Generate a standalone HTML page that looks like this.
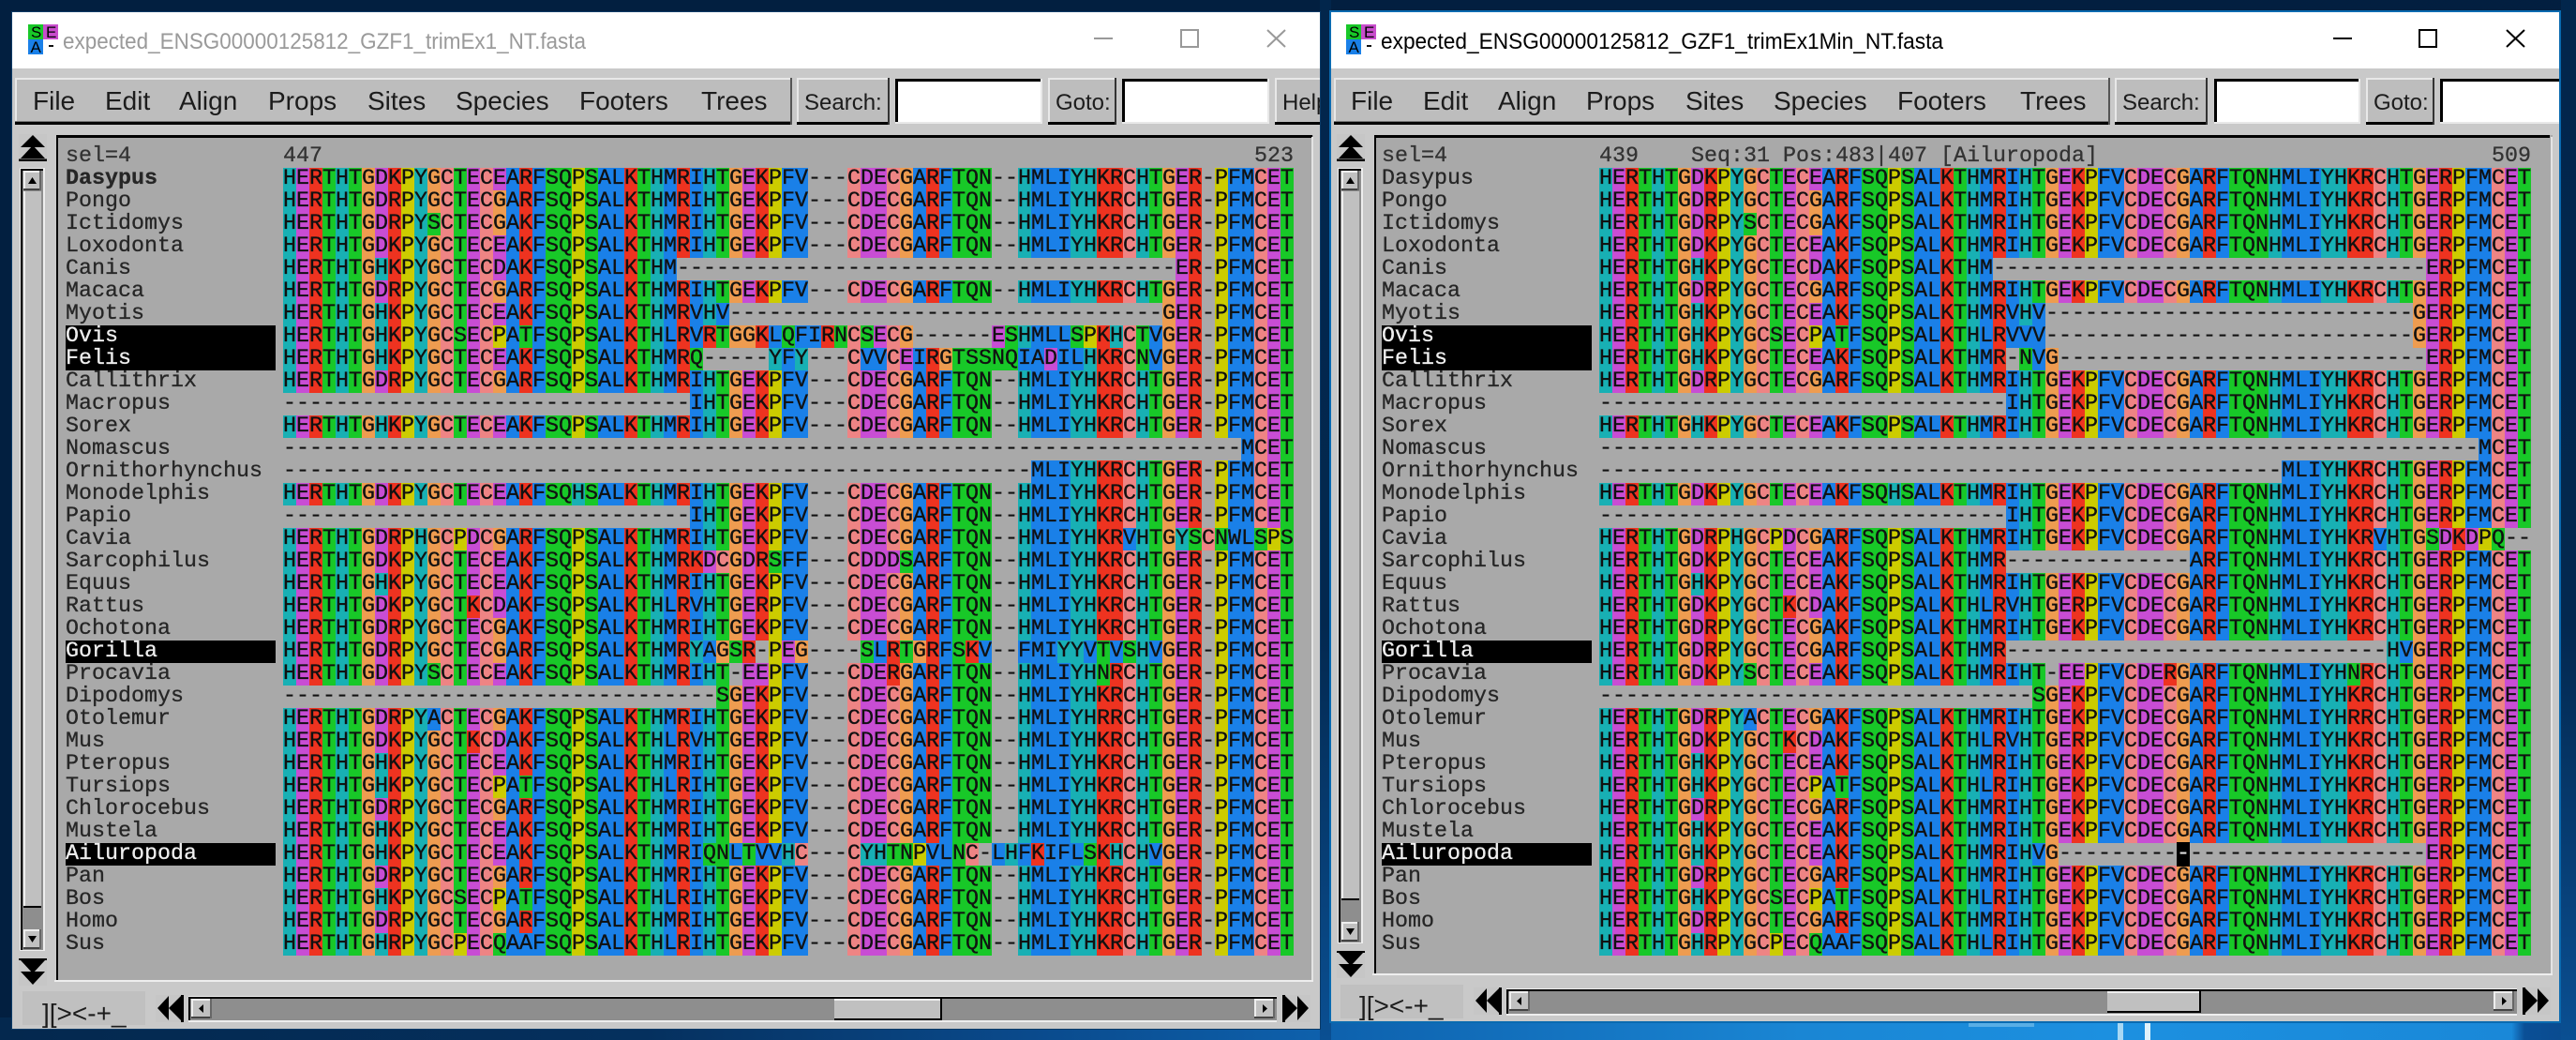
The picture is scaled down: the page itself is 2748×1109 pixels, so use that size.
<!DOCTYPE html>
<html><head><meta charset="utf-8"><title>SeaView</title>
<style>
html,body{margin:0;padding:0;width:2748px;height:1109px;overflow:hidden;background:#021f40}
svg.c{position:absolute;left:0;top:0}
svg text{font-family:"Liberation Sans",sans-serif;fill:#1c1c1c}
.m{font-size:28px}.t{font-size:24px}
.blk{position:absolute;font:23.33px/24px "Liberation Mono",monospace;color:#111;white-space:nowrap;margin:0;-webkit-text-stroke:.3px currentColor}
.blk div{height:24px}
.lab{color:#262626}
.lab i{font-style:normal;display:block;height:24px;background:#000;color:#eee;width:224px;margin-left:1px}
.lab div{padding-left:1px}
.hd{color:#333;white-space:pre}
.cur{background:#000;color:#ddd}
</style></head><body>
<svg class="c" width="2748" height="1109" viewBox="0 0 2748 1109" xmlns="http://www.w3.org/2000/svg">
<defs>
<linearGradient id="wp" x1="0" x2="1" y1="0" y2="0">
<stop offset="0" stop-color="#04284e"/><stop offset=".25" stop-color="#05305e"/><stop offset=".4" stop-color="#0a4a8c"/><stop offset=".52" stop-color="#0e62ae"/><stop offset=".7" stop-color="#1a86d4"/><stop offset=".82" stop-color="#1c90e0"/><stop offset=".975" stop-color="#1a88d8"/><stop offset=".98" stop-color="#0a4f96"/><stop offset="1" stop-color="#0a4a8e"/>
</linearGradient>
<linearGradient id="gap" x1="0" x2="0" y1="0" y2="1"><stop offset="0" stop-color="#02264c"/><stop offset=".6" stop-color="#03284f"/><stop offset="1" stop-color="#0a4f92"/></linearGradient>
<g id="dbu"><rect width="30" height="29" fill="#c6c6c6"/><polygon points="15,1 28,14 2,14"/><polygon points="15,12 28,26 2,26"/><rect y="26.5" width="30" height="2.5"/></g>
<g id="dbd"><rect width="30" height="29" fill="#c6c6c6"/><rect width="30" height="2"/><polygon points="2,2 28,2 15,16"/><polygon points="2,14 28,14 15,28"/></g>
<g id="dbl"><rect width="30" height="29" fill="#c6c6c6"/><polygon points="2,14 14,1 14,27"/><polygon points="14,14 27,1 27,27"/><rect x="27" width="3" height="29"/></g>
<g id="dbr"><rect width="30" height="29" fill="#c6c6c6"/><polygon points="28,14 16,1 16,27"/><polygon points="16,14 3,1 3,27"/><rect width="3" height="29"/></g>
<g id="ub"><rect width="19" height="21" fill="#c0c0c0"/><rect width="19" height="2" fill="#eee"/><rect width="2" height="21" fill="#eee"/><rect y="19" width="19" height="2" fill="#444"/><rect x="17" width="2" height="21" fill="#666"/><polygon points="9.5,7 5,14 14,14"/></g>
<g id="db"><rect width="19" height="21" fill="#c0c0c0"/><rect width="19" height="2" fill="#eee"/><rect width="2" height="21" fill="#eee"/><rect y="19" width="19" height="2" fill="#444"/><rect x="17" width="2" height="21" fill="#666"/><polygon points="5,7 14,7 9.5,14"/></g>
<g id="lb"><rect width="22" height="21" fill="#c0c0c0"/><rect width="22" height="2" fill="#eee"/><rect width="2" height="21" fill="#eee"/><rect y="19" width="22" height="2" fill="#444"/><rect x="20" width="2" height="21" fill="#666"/><polygon points="8,10.5 13,6 13,15"/></g>
<g id="rb"><rect width="22" height="21" fill="#c0c0c0"/><rect width="22" height="2" fill="#eee"/><rect width="2" height="21" fill="#eee"/><rect y="19" width="22" height="2" fill="#444"/><rect x="20" width="2" height="21" fill="#666"/><polygon points="14,10.5 9,6 9,15"/></g>
<g id="logo"><rect width="16" height="16" fill="#18c828"/><rect x="16" width="16" height="16" fill="#c84dcc"/><rect y="16" width="16" height="16" fill="#1a80e8"/><rect x="22" y="22" width="5" height="2" fill="#111"/>
<text x="3" y="14" style="font-size:17px;fill:#000">S</text><text x="19" y="14" style="font-size:17px;fill:#000">E</text><text x="2.5" y="30" style="font-size:17px;fill:#000">A</text></g>
</defs>
<!-- wallpaper -->
<rect width="2748" height="1109" fill="#021f40"/>
<rect y="1085" width="2748" height="24" fill="url(#wp)"/>
<rect x="1408" y="0" width="12" height="1109" fill="url(#gap)"/>
<rect x="2732" y="0" width="16" height="1109" fill="url(#gap)"/>
<rect x="2100" y="1091" width="70" height="4" fill="#58aee6"/>
<rect x="2259" y="1091" width="6" height="18" fill="#a8d8f4"/><rect x="2288" y="1091" width="6" height="18" fill="#e0f2fb"/>

<!-- LEFT WINDOW -->
<rect x="12" y="12" width="1397" height="1086" fill="#0b3a66"/>
<svg x="13" y="13" width="1395" height="1084" viewBox="13 13 1395 1084">
<rect x="13" y="13" width="1395" height="1084" fill="#c9c9c9"/>
<rect x="13" y="13" width="1395" height="60" fill="#fff"/>
<use href="#logo" x="30" y="26"/>
<text x="67" y="52" textLength="558" lengthAdjust="spacingAndGlyphs" style="font-size:24px;fill:#9a9a9a">expected_ENSG00000125812_GZF1_trimEx1_NT.fasta</text>
<rect x="1167" y="40" width="20" height="2" fill="#999"/>
<rect x="1260" y="32" width="18" height="18" fill="none" stroke="#999" stroke-width="2"/>
<path d="M1352 32L1371 50M1371 32L1352 50" stroke="#999" stroke-width="2" fill="none"/>
<!-- menu -->
<rect x="16" y="83" width="829" height="49" fill="#bdbdbd"/><rect x="16" y="83" width="829" height="2" fill="#e8e8e8"/><rect x="16" y="83" width="2" height="49" fill="#e8e8e8"/><rect x="16" y="129" width="829" height="1" fill="#777"/><rect x="16" y="130" width="829" height="3"/><rect x="843" y="83" width="2" height="50" fill="#555"/>
<text class="m" x="35" y="117">File</text><text class="m" x="112" y="117">Edit</text><text class="m" x="191" y="117">Align</text><text class="m" x="286" y="117">Props</text><text class="m" x="392" y="117">Sites</text><text class="m" x="486" y="117">Species</text><text class="m" x="618" y="117">Footers</text><text class="m" x="748" y="117">Trees</text>
<!-- search -->
<rect x="850" y="83" width="99" height="49" fill="#bdbdbd"/><rect x="850" y="83" width="99" height="2" fill="#e8e8e8"/><rect x="850" y="83" width="2" height="49" fill="#e8e8e8"/><rect x="850" y="130" width="99" height="3"/><rect x="947" y="83" width="2" height="50" fill="#333"/>
<text class="t" x="858" y="117">Search:</text>
<rect x="955" y="84" width="157" height="48" fill="#fff"/><rect x="955" y="84" width="157" height="3"/><rect x="955" y="84" width="3" height="47"/><rect x="955" y="130" width="157" height="2" fill="#e8e8e8"/><rect x="1110" y="84" width="2" height="48" fill="#e8e8e8"/>
<rect x="1118" y="83" width="73" height="49" fill="#bdbdbd"/><rect x="1118" y="83" width="73" height="2" fill="#e8e8e8"/><rect x="1118" y="83" width="2" height="49" fill="#e8e8e8"/><rect x="1118" y="130" width="73" height="3"/><rect x="1189" y="83" width="2" height="50" fill="#333"/>
<text class="t" x="1126" y="117">Goto:</text>
<rect x="1197" y="84" width="157" height="48" fill="#fff"/><rect x="1197" y="84" width="157" height="3"/><rect x="1197" y="84" width="3" height="47"/><rect x="1197" y="130" width="157" height="2" fill="#e8e8e8"/><rect x="1352" y="84" width="2" height="48" fill="#e8e8e8"/>
<rect x="1360" y="83" width="60" height="49" fill="#bdbdbd"/><rect x="1360" y="83" width="60" height="2" fill="#e8e8e8"/><rect x="1360" y="83" width="2" height="49" fill="#e8e8e8"/><rect x="1360" y="130" width="60" height="3"/>
<text class="t" x="1368" y="117">Help</text>
<!-- panel -->
<rect x="60" y="144" width="1341" height="903" fill="#a9a9a9"/><rect x="60" y="144" width="1340" height="3"/><rect x="60" y="144" width="2" height="903"/><rect x="1399" y="146" width="2" height="901" fill="#e4e4e4"/><rect x="58" y="1045" width="1343" height="2" fill="#eee"/>
<!-- v scroll -->
<use href="#dbu" x="20" y="143"/>
<rect x="21" y="179" width="27" height="835" fill="#eee"/><rect x="22" y="180" width="24" height="833" fill="#8e8e8e"/><rect x="22" y="180" width="24" height="2"/><rect x="22" y="180" width="2" height="833"/>
<use href="#ub" x="25" y="182"/>
<rect x="25" y="204" width="19" height="762" fill="#c0c0c0"/><rect x="25" y="204" width="2" height="762" fill="#eee"/><rect x="25" y="966" width="19" height="2"/>
<use href="#db" x="25" y="991"/>
<use href="#dbd" x="20" y="1022"/>
<!-- bottom -->
<rect x="24" y="1057" width="131" height="36" fill="#c0c0c0"/>
<text class="m" x="45" y="1090">][&gt;&lt;-+_</text>
<use href="#dbl" x="166" y="1061"/>
<rect x="201" y="1062" width="1161" height="28" fill="#eee"/><rect x="201" y="1063" width="1161" height="25" fill="#8e8e8e"/><rect x="201" y="1063" width="1161" height="2"/><rect x="201" y="1063" width="2" height="25"/>
<use href="#lb" x="204" y="1065"/>
<rect x="890" y="1065" width="114" height="21" fill="#c0c0c0"/><rect x="890" y="1065" width="114" height="2" fill="#eee"/><rect x="890" y="1086" width="114" height="2"/><rect x="1003" y="1065" width="2" height="23"/>
<use href="#rb" x="1338" y="1065"/>
<use href="#dbr" x="1368" y="1061"/>
</svg>

<!-- RIGHT WINDOW -->
<rect x="1418" y="11" width="1314" height="1080" fill="#0a6ab0"/>
<svg x="1420" y="13" width="1310" height="1076" viewBox="1420 13 1310 1076">
<rect x="1420" y="13" width="1310" height="1076" fill="#c9c9c9"/>
<rect x="1420" y="13" width="1310" height="60" fill="#fff"/>
<use href="#logo" x="1436" y="26"/>
<text x="1473" y="52" textLength="600" lengthAdjust="spacingAndGlyphs" style="font-size:24px;fill:#000">expected_ENSG00000125812_GZF1_trimEx1Min_NT.fasta</text>
<rect x="2489" y="40" width="20" height="2" fill="#000"/>
<rect x="2581" y="32" width="18" height="18" fill="none" stroke="#000" stroke-width="2"/>
<path d="M2674 32L2693 50M2693 32L2674 50" stroke="#000" stroke-width="2" fill="none"/>
<rect x="1423" y="83" width="828" height="49" fill="#bdbdbd"/><rect x="1423" y="83" width="828" height="2" fill="#e8e8e8"/><rect x="1423" y="83" width="2" height="49" fill="#e8e8e8"/><rect x="1423" y="129" width="828" height="1" fill="#777"/><rect x="1423" y="130" width="828" height="3"/><rect x="2249" y="83" width="2" height="50" fill="#555"/>
<text class="m" x="1441" y="117">File</text><text class="m" x="1518" y="117">Edit</text><text class="m" x="1598" y="117">Align</text><text class="m" x="1692" y="117">Props</text><text class="m" x="1798" y="117">Sites</text><text class="m" x="1892" y="117">Species</text><text class="m" x="2024" y="117">Footers</text><text class="m" x="2155" y="117">Trees</text>
<rect x="2256" y="83" width="99" height="49" fill="#bdbdbd"/><rect x="2256" y="83" width="99" height="2" fill="#e8e8e8"/><rect x="2256" y="83" width="2" height="49" fill="#e8e8e8"/><rect x="2256" y="130" width="99" height="3"/><rect x="2353" y="83" width="2" height="50" fill="#333"/>
<text class="t" x="2264" y="117">Search:</text>
<rect x="2362" y="84" width="156" height="48" fill="#fff"/><rect x="2362" y="84" width="156" height="3"/><rect x="2362" y="84" width="3" height="47"/><rect x="2362" y="130" width="156" height="2" fill="#e8e8e8"/><rect x="2516" y="84" width="2" height="48" fill="#e8e8e8"/>
<rect x="2524" y="83" width="73" height="49" fill="#bdbdbd"/><rect x="2524" y="83" width="73" height="2" fill="#e8e8e8"/><rect x="2524" y="83" width="2" height="49" fill="#e8e8e8"/><rect x="2524" y="130" width="73" height="3"/><rect x="2595" y="83" width="2" height="50" fill="#333"/>
<text class="t" x="2532" y="117">Goto:</text>
<rect x="2603" y="84" width="157" height="48" fill="#fff"/><rect x="2603" y="84" width="157" height="3"/><rect x="2603" y="84" width="3" height="47"/><rect x="2603" y="130" width="157" height="2" fill="#e8e8e8"/>
<rect x="1466" y="144" width="1257" height="896" fill="#a9a9a9"/><rect x="1466" y="144" width="1254" height="3"/><rect x="1466" y="144" width="2" height="896"/><rect x="2721" y="146" width="2" height="894" fill="#e4e4e4"/><rect x="1464" y="1038" width="1259" height="2" fill="#eee"/>
<use href="#dbu" x="1426" y="143"/>
<rect x="1427" y="179" width="27" height="827" fill="#eee"/><rect x="1428" y="180" width="24" height="825" fill="#8e8e8e"/><rect x="1428" y="180" width="24" height="2"/><rect x="1428" y="180" width="2" height="825"/>
<use href="#ub" x="1431" y="182"/>
<rect x="1431" y="204" width="19" height="754" fill="#c0c0c0"/><rect x="1431" y="204" width="2" height="754" fill="#eee"/><rect x="1431" y="958" width="19" height="2"/>
<use href="#db" x="1431" y="983"/>
<use href="#dbd" x="1426" y="1014"/>
<rect x="1430" y="1050" width="131" height="36" fill="#c0c0c0"/>
<text class="m" x="1450" y="1082">][&gt;&lt;-+_</text>
<use href="#dbl" x="1572" y="1053"/>
<rect x="1607" y="1054" width="1078" height="29" fill="#eee"/><rect x="1607" y="1055" width="1078" height="26" fill="#8e8e8e"/><rect x="1607" y="1055" width="1078" height="2"/><rect x="1607" y="1055" width="2" height="26"/>
<use href="#lb" x="1610" y="1057"/>
<rect x="2248" y="1057" width="99" height="21" fill="#c0c0c0"/><rect x="2248" y="1057" width="99" height="2" fill="#eee"/><rect x="2248" y="1078" width="99" height="2"/><rect x="2346" y="1057" width="2" height="23"/>
<use href="#rb" x="2660" y="1057"/>
<use href="#dbr" x="2691" y="1053"/>
</svg>
</svg>

<!-- LEFT TEXT -->
<div class="blk hd" style="left:70px;top:155px">sel=4</div>
<div class="blk hd" style="left:302px;top:155px">447</div>
<div class="blk hd" style="left:1338px;top:155px">523</div>
<div class="blk lab" style="left:69px;top:179px"><div><b>Dasypus</b></div><div>Pongo</div><div>Ictidomys</div><div>Loxodonta</div><div>Canis</div><div>Macaca</div><div>Myotis</div><i>Ovis</i><i>Felis</i><div>Callithrix</div><div>Macropus</div><div>Sorex</div><div>Nomascus</div><div>Ornithorhynchus</div><div>Monodelphis</div><div>Papio</div><div>Cavia</div><div>Sarcophilus</div><div>Equus</div><div>Rattus</div><div>Ochotona</div><i>Gorilla</i><div>Procavia</div><div>Dipodomys</div><div>Otolemur</div><div>Mus</div><div>Pteropus</div><div>Tursiops</div><div>Chlorocebus</div><div>Mustela</div><i>Ailuropoda</i><div>Pan</div><div>Bos</div><div>Homo</div><div>Sus</div></div>
<div class="blk sq" style="left:302px;top:179px">
<div>HERTHTGDKPYGCTECEARFSQPSALKTHMRIHTGEKPFV---CDECGARFTQN--HMLIYHKRCHTGER-PFMCET</div>
<div>HERTHTGDRPYGCTECGARFSQPSALKTHMRIHTGEKPFV---CDECGARFTQN--HMLIYHKRCHTGER-PFMCET</div>
<div>HERTHTGDRPYSCTECGAKFSQPSALKTHMRIHTGEKPFV---CDECGARFTQN--HMLIYHKRCHTGER-PFMCET</div>
<div>HERTHTGDKPYGCTECEAKFSQPSALKTHMRIHTGEKPFV---CDECGARFTQN--HMLIYHKRCHTGER-PFMCET</div>
<div>HERTHTGHKPYGCTECDAKFSQPSALKTHM--------------------------------------ER-PFMCET</div>
<div>HERTHTGDRPYGCTECGARFSQPSALKTHMRIHTGEKPFV---CDECGARFTQN--HMLIYHKRCHTGER-PFMCET</div>
<div>HERTHTGHKPYGCTECEAKFSQPSALKTHMRVHV---------------------------------GER-PFMCET</div>
<div>HERTHTGHKPYGCSECPATFSQPSALKTHLRVRTGGKLQFIRNCSECG------ESHMLLSPKHCTVGER-PFMCET</div>
<div>HERTHTGHKPYGCTECEAKFSQPSALKTHMRQ-----YFY---CVVCEIRGTSSNQIADILHKRCNVGER-PFMCET</div>
<div>HERTHTGDRPYGCTECGARFSQPSALKTHMRIHTGEKPFV---CDECGARFTQN--HMLIYHKRCHTGER-PFMCET</div>
<div>-------------------------------IHTGEKPFV---CDECGARFTQN--HMLIYHKRCHTGER-PFMCET</div>
<div>HERTHTGHKPYGCTECEAKFSQPSALKTHMRIHTGEKPFV---CDECGARFTQN--HMLIYHKRCHTGER-PFMCET</div>
<div>-------------------------------------------------------------------------MCET</div>
<div>---------------------------------------------------------MLIYHKRCHTGER-PFMCET</div>
<div>HERTHTGDKPYGCTECEAKFSQHSALKTHMRIHTGEKPFV---CDECGARFTQN--HMLIYHKRCHTGER-PFMCET</div>
<div>-------------------------------IHTGEKPFV---CDECGARFTQN--HMLIYHKRCHTGER-PFMCET</div>
<div>HERTHTGDRPHGCPDCGARFSQPSALKTHMRIHTGEKPFV---CDECGARFTQN--HMLIYHKRVHTGYSCNWLSPS</div>
<div>HERTHTGDKPYGCTECEAKFSQPSALKTHMRKDCGDRSFF---CDDDSARFTQN--HMLIYHKRCHTGER-PFMCET</div>
<div>HERTHTGHKPYGCTECEAKFSQPSALKTHMRIHTGEKPFV---CDECGARFTQN--HMLIYHKRCHTGER-PFMCET</div>
<div>HERTHTGDKPYGCTKCDAKFSQPSALKTHLRVHTGERPFV---CDECGARFTQN--HMLIYHKRCHTGER-PFMCET</div>
<div>HERTHTGDRPYGCTECGAKFSQPSALKTHMRIHTGEKPFV---CDECGARFTQN--HMLIYHKRCHTGER-PFMCET</div>
<div>HERTHTGDRPYGCTECGARFSQPSALKTHMRYAGSR-PEG----SLRTGRFSKV--FMIYYVTVSHVGER-PFMCET</div>
<div>HERTHTGDKPYSCTECEAKFSQPSALKTHMRIHT-EEPFV---CDERGARFTQN--HMLIYHNRCHTGER-PFMCET</div>
<div>---------------------------------SGEKPFV---CDECGARFTQN--HMLIYHKRCHTGER-PFMCET</div>
<div>HERTHTGDRPYACTECGAKFSQPSALKTHMRIHTGEKPFV---CDECGARFTQN--HMLIYHRRCHTGER-PFMCET</div>
<div>HERTHTGDKPYGCTKCDAKFSQPSALKTHLRVHTGERPFV---CDECGARFTQN--HMLIYHKRCHTGER-PFMCET</div>
<div>HERTHTGHKPYGCTECEAKFSQPSALKTHMRIHTGEKPFV---CDECGARFTQN--HMLIYHKRCHTGER-PFMCET</div>
<div>HERTHTGHKPYGCTECPATFSQPSALKTHLRIHTGEKPFV---CDECGARFTQN--HMLIYHKRCHTGER-PFMCET</div>
<div>HERTHTGDRPYGCTECGARFSQPSALKTHMRIHTGEKPFV---CDECGARFTQN--HMLIYHKRCHTGER-PFMCET</div>
<div>HERTHTGHKPYGCTECEAKFSQPSALKTHMRIHTGEKPFV---CDECGARFTQN--HMLIYHKRCHTGER-PFMCET</div>
<div>HERTHTGHKPYGCTECEAKFSQPSALKTHMRIQNLTVVHC---CYHTNPVLNC-LHFKIFLSKHCHVGER-PFMCET</div>
<div>HERTHTGDRPYGCTECGARFSQPSALKTHMRIHTGEKPFV---CDECGARFTQN--HMLIYHKRCHTGER-PFMCET</div>
<div>HERTHTGHKPYGCSECPATFSQPSALKTHLRIHTGEKPFV---CDECGARFTQN--HMLIYHKRCHTGER-PFMCET</div>
<div>HERTHTGDRPYGCTECGARFSQPSALKTHMRIHTGEKPFV---CDECGARFTQN--HMLIYHKRCHTGER-PFMCET</div>
<div>HERTHTGHRPYGCPECQAAFSQPSALKTHLRIHTGEKPFV---CDECGARFTQN--HMLIYHKRCHTGER-PFMCET</div>
</div>

<!-- RIGHT TEXT -->
<div class="blk hd" style="left:1474px;top:155px">sel=4</div>
<div class="blk hd" style="left:1706px;top:155px">439    Seq:31 Pos:483|407 [Ailuropoda]</div>
<div class="blk hd" style="left:2658px;top:155px">509</div>
<div class="blk lab" style="left:1473px;top:179px"><div>Dasypus</div><div>Pongo</div><div>Ictidomys</div><div>Loxodonta</div><div>Canis</div><div>Macaca</div><div>Myotis</div><i>Ovis</i><i>Felis</i><div>Callithrix</div><div>Macropus</div><div>Sorex</div><div>Nomascus</div><div>Ornithorhynchus</div><div>Monodelphis</div><div>Papio</div><div>Cavia</div><div>Sarcophilus</div><div>Equus</div><div>Rattus</div><div>Ochotona</div><i>Gorilla</i><div>Procavia</div><div>Dipodomys</div><div>Otolemur</div><div>Mus</div><div>Pteropus</div><div>Tursiops</div><div>Chlorocebus</div><div>Mustela</div><i>Ailuropoda</i><div>Pan</div><div>Bos</div><div>Homo</div><div>Sus</div></div>
<div class="blk sq" style="left:1706px;top:179px">
<div>HERTHTGDKPYGCTECEARFSQPSALKTHMRIHTGEKPFVCDECGARFTQNHMLIYHKRCHTGERPFMCET</div>
<div>HERTHTGDRPYGCTECGARFSQPSALKTHMRIHTGEKPFVCDECGARFTQNHMLIYHKRCHTGERPFMCET</div>
<div>HERTHTGDRPYSCTECGAKFSQPSALKTHMRIHTGEKPFVCDECGARFTQNHMLIYHKRCHTGERPFMCET</div>
<div>HERTHTGDKPYGCTECEAKFSQPSALKTHMRIHTGEKPFVCDECGARFTQNHMLIYHKRCHTGERPFMCET</div>
<div>HERTHTGHKPYGCTECDAKFSQPSALKTHM---------------------------------ERPFMCET</div>
<div>HERTHTGDRPYGCTECGARFSQPSALKTHMRIHTGEKPFVCDECGARFTQNHMLIYHKRCHTGERPFMCET</div>
<div>HERTHTGHKPYGCTECEAKFSQPSALKTHMRVHV----------------------------GERPFMCET</div>
<div>HERTHTGHKPYGCSECPATFSQPSALKTHLRVVV----------------------------GERPFMCET</div>
<div>HERTHTGHKPYGCTECEAKFSQPSALKTHMR-NVG----------------------------ERPFMCET</div>
<div>HERTHTGDRPYGCTECGARFSQPSALKTHMRIHTGEKPFVCDECGARFTQNHMLIYHKRCHTGERPFMCET</div>
<div>-------------------------------IHTGEKPFVCDECGARFTQNHMLIYHKRCHTGERPFMCET</div>
<div>HERTHTGHKPYGCTECEAKFSQPSALKTHMRIHTGEKPFVCDECGARFTQNHMLIYHKRCHTGERPFMCET</div>
<div>-------------------------------------------------------------------MCET</div>
<div>----------------------------------------------------MLIYHKRCHTGERPFMCET</div>
<div>HERTHTGDKPYGCTECEAKFSQHSALKTHMRIHTGEKPFVCDECGARFTQNHMLIYHKRCHTGERPFMCET</div>
<div>-------------------------------IHTGEKPFVCDECGARFTQNHMLIYHKRCHTGERPFMCET</div>
<div>HERTHTGDRPHGCPDCGARFSQPSALKTHMRIHTGEKPFVCDECGARFTQNHMLIYHKRVHTGSDKDPQ--</div>
<div>HERTHTGDKPYGCTECEAKFSQPSALKTHMR--------------ARFTQNHMLIYHKRCHTGERPFMCET</div>
<div>HERTHTGHKPYGCTECEAKFSQPSALKTHMRIHTGEKPFVCDECGARFTQNHMLIYHKRCHTGERPFMCET</div>
<div>HERTHTGDKPYGCTKCDAKFSQPSALKTHLRVHTGERPFVCDECGARFTQNHMLIYHKRCHTGERPFMCET</div>
<div>HERTHTGDRPYGCTECGAKFSQPSALKTHMRIHTGEKPFVCDECGARFTQNHMLIYHKRCHTGERPFMCET</div>
<div>HERTHTGDRPYGCTECGARFSQPSALKTHMR-----------------------------HVGERPFMCET</div>
<div>HERTHTGDKPYSCTECEAKFSQPSALKTHMRIHT-EEPFVCDERGARFTQNHMLIYHNRCHTGERPFMCET</div>
<div>---------------------------------SGEKPFVCDECGARFTQNHMLIYHKRCHTGERPFMCET</div>
<div>HERTHTGDRPYACTECGAKFSQPSALKTHMRIHTGEKPFVCDECGARFTQNHMLIYHRRCHTGERPFMCET</div>
<div>HERTHTGDKPYGCTKCDAKFSQPSALKTHLRVHTGERPFVCDECGARFTQNHMLIYHKRCHTGERPFMCET</div>
<div>HERTHTGHKPYGCTECEAKFSQPSALKTHMRIHTGEKPFVCDECGARFTQNHMLIYHKRCHTGERPFMCET</div>
<div>HERTHTGHKPYGCTECPATFSQPSALKTHLRIHTGEKPFVCDECGARFTQNHMLIYHKRCHTGERPFMCET</div>
<div>HERTHTGDRPYGCTECGARFSQPSALKTHMRIHTGEKPFVCDECGARFTQNHMLIYHKRCHTGERPFMCET</div>
<div>HERTHTGHKPYGCTECEAKFSQPSALKTHMRIHTGEKPFVCDECGARFTQNHMLIYHKRCHTGERPFMCET</div>
<div>HERTHTGHKPYGCTECEAKFSQPSALKTHMRIHVG---------<span class="cur">-</span>------------------ERPFMCET</div>
<div>HERTHTGDRPYGCTECGARFSQPSALKTHMRIHTGEKPFVCDECGARFTQNHMLIYHKRCHTGERPFMCET</div>
<div>HERTHTGHKPYGCSECPATFSQPSALKTHLRIHTGEKPFVCDECGARFTQNHMLIYHKRCHTGERPFMCET</div>
<div>HERTHTGDRPYGCTECGARFSQPSALKTHMRIHTGEKPFVCDECGARFTQNHMLIYHKRCHTGERPFMCET</div>
<div>HERTHTGHRPYGCPECQAAFSQPSALKTHLRIHTGEKPFVCDECGARFTQNHMLIYHKRCHTGERPFMCET</div>
</div>
<script>
(function(){
var b='#1a80e8',r='#ee3320',m='#c84dd4',g='#18c828',p='#ee8484',o='#ee9c50',y='#cccc00',c='#18b0b4';
var C={A:b,I:b,L:b,M:b,F:b,W:b,V:b,K:r,R:r,D:m,E:m,N:g,Q:g,S:g,T:g,C:p,G:o,P:y,H:c,Y:c};
document.querySelectorAll('.sq>div').forEach(function(el){
  var t=el.textContent,s=[],i=0;
  while(i<t.length){var col=C[t[i]]||'transparent',j=i;while(j<t.length&&(C[t[j]]||'transparent')===col)j++;
    s.push(col+' '+(i*14)+'px '+(j*14)+'px');i=j;}
  el.style.backgroundImage='linear-gradient(90deg,'+s.join(',')+')';
  el.style.width=(t.length*14)+'px';
});
})();
</script>
</body></html>
